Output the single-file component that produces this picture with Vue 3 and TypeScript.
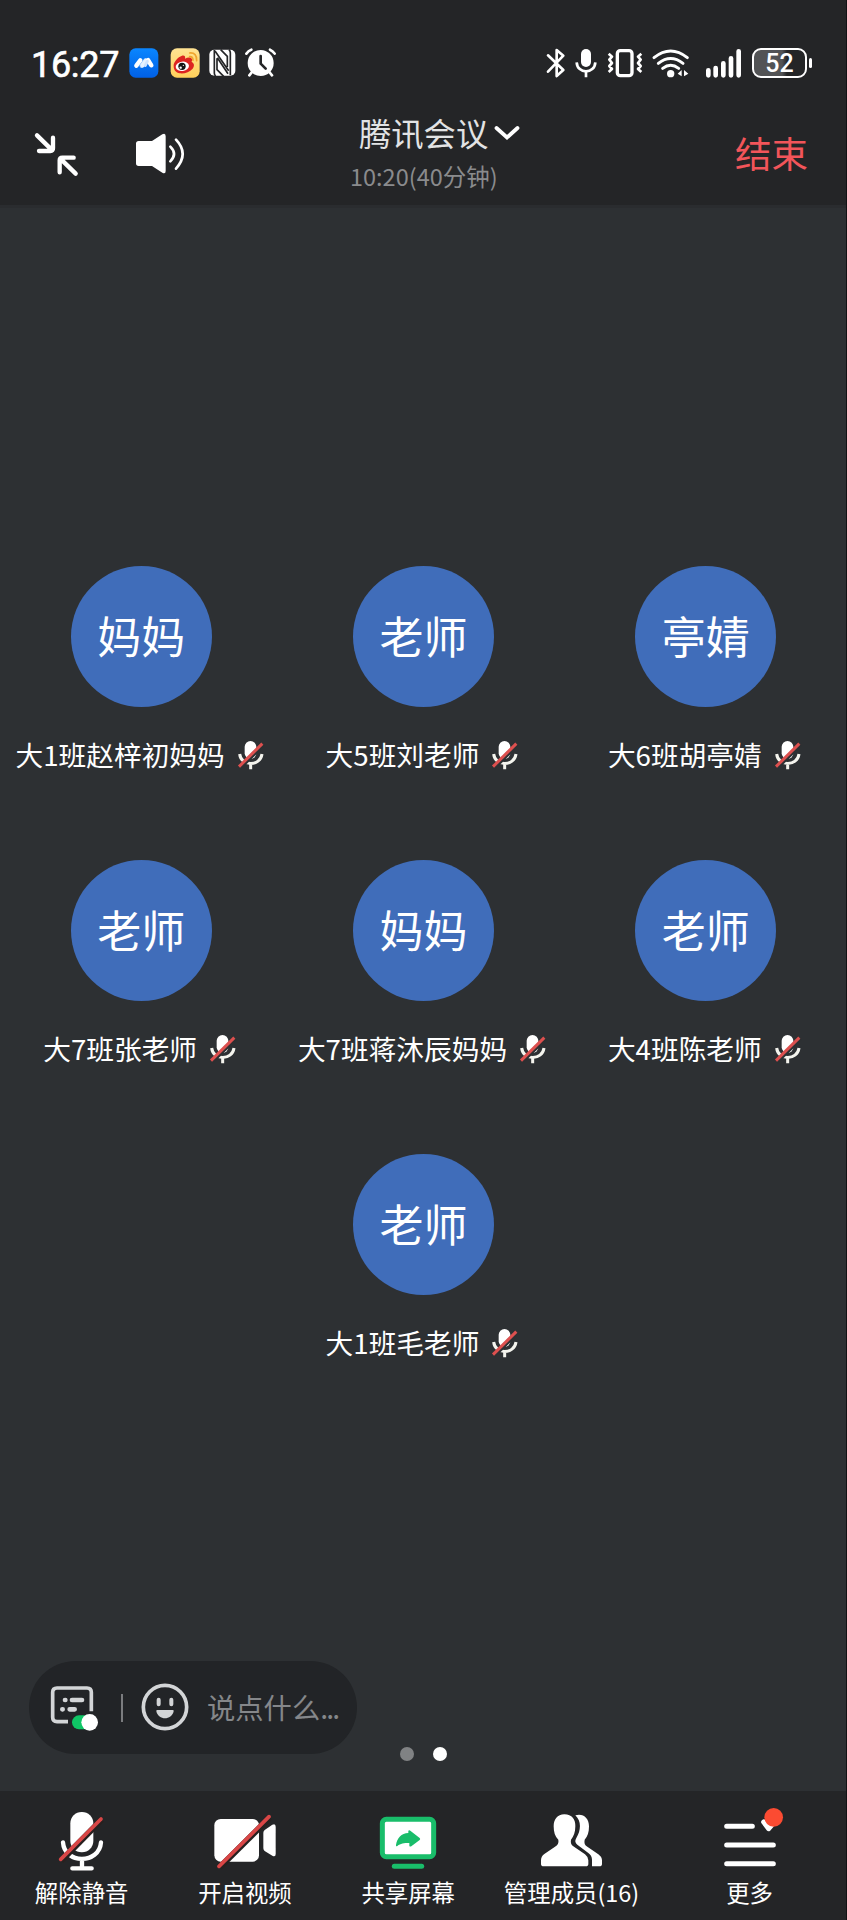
<script setup lang="ts">
interface Participant {
  avatar: string
  name: string
}

const participants: Participant[] = [
  { avatar: '妈妈', name: '大1班赵梓初妈妈' },
  { avatar: '老师', name: '大5班刘老师' },
  { avatar: '亭婧', name: '大6班胡亭婧' },
  { avatar: '老师', name: '大7班张老师' },
  { avatar: '妈妈', name: '大7班蒋沐辰妈妈' },
  { avatar: '老师', name: '大4班陈老师' },
  { avatar: '老师', name: '大1班毛老师' },
]
</script>

<template>
  <div class="screen">
    <header class="top">
      <div class="status">
        <span class="clock">16:27</span>
        <svg class="app meet" width="30" height="30" viewBox="387 53 90 90">
          <defs>
            <linearGradient id="meetBg" x1="0" y1="0" x2="0" y2="1">
              <stop offset="0" stop-color="#0a86ff" />
              <stop offset="1" stop-color="#0060e6" />
            </linearGradient>
          </defs>
          <rect x="388" y="54" width="87" height="88" rx="19" fill="url(#meetBg)" />
          <g stroke-linecap="round" stroke-width="13">
            <path d="M409 106l12-16" stroke="#fff" />
            <path d="M425 106l12-16" stroke="#a9d0ff" />
            <path d="M428 105l9-13" stroke="#e6f2ff" />
            <path d="M444 89l10 16" stroke="#fff" />
            <path d="M442 93l-6 12" stroke="#cfe4ff" stroke-width="9" />
          </g>
        </svg>
        <svg class="app weibo" width="30" height="30" viewBox="511 53 90 90">
          <defs>
            <linearGradient id="weiboBg" x1="0" y1="0" x2="0" y2="1">
              <stop offset="0" stop-color="#ffe393" />
              <stop offset="1" stop-color="#ffd05a" />
            </linearGradient>
          </defs>
          <rect x="513" y="54" width="87" height="88" rx="19" fill="url(#weiboBg)" />
          <path d="M522 107c-1-12 13-27 25-31 7-2 11 2 9 9 8-4 19-5 21 2 1 3-1 6-1 8 8 3 9 13 3 20-9 11-26 16-39 14-11-2-18-10-18-22z" fill="#dc2421" />
          <ellipse cx="548" cy="108" rx="20" ry="14" fill="#fff" transform="rotate(-8 548 108)" />
          <circle cx="547" cy="108" r="11" fill="#151515" />
          <circle cx="543" cy="112" r="3.5" fill="#fff" />
          <circle cx="551" cy="105" r="2" fill="#fff" />
          <path d="M570 79q10-1 10 11M570 68q22-2 21 23" fill="none" stroke="#f0a52e" stroke-width="5" stroke-linecap="round" />
        </svg>
        <svg class="nfc" width="27" height="28" viewBox="627 58 81 84">
          <rect x="628" y="60" width="78" height="78" rx="15" fill="#fff" />
          <path d="M643 61v70q0 5 4 8M691 137V69q0-5-4-9" fill="none" stroke="#242527" stroke-width="5" />
          <path d="M645 64l41 59M651 86v34l20 20M682 112V80l-20-20M652 84l32 48" fill="none" stroke="#242527" stroke-width="5" />
        </svg>
        <svg class="alarm" width="31" height="30" viewBox="737 55 93 90">
          <circle cx="784" cy="100" r="39" fill="#fff" />
          <path d="M741 72q6-9 15-12M812 60q9 4 14 12M758 127l-8 10M810 127l8 10" fill="none" stroke="#fff" stroke-width="8" stroke-linecap="round" />
          <path d="M784 79v23l15 15" fill="none" stroke="#242527" stroke-width="8" stroke-linecap="round" stroke-linejoin="round" />
        </svg>
        <span class="spring"></span>
        <svg class="bluetooth" width="20" height="30" viewBox="78 53 60 90">
          <path d="M84 75l46 44-20 18V59l20 17-46 48" fill="none" stroke="#fff" stroke-width="8" stroke-linecap="round" stroke-linejoin="round" />
        </svg>
        <svg class="mic" width="22" height="30" viewBox="166 53 66 90">
          <rect x="184" y="56" width="30" height="54" rx="15" fill="#fff" />
          <path d="M171 96c2 36 54 36 56 0M199 122v19" fill="none" stroke="#fff" stroke-width="8" />
        </svg>
        <svg class="vibrate" width="36" height="30" viewBox="261 53 108 90">
          <rect x="292" y="61" width="44" height="75" rx="9" fill="none" stroke="#fff" stroke-width="10" />
          <path d="M266 70l10 9-8 9 8 10-8 9 8 9-10 9M364 70l-10 9 8 9-8 10 8 9-8 9 10 9" fill="none" stroke="#fff" stroke-width="8" stroke-linejoin="round" />
        </svg>
        <svg class="wifi" width="38" height="30" viewBox="397 53 114 90">
          <path d="M403 82q50-40 100 0M416 99q37-29 74 0M429 114q24-18 48 0" fill="none" stroke="#fff" stroke-width="9" stroke-linecap="round" />
          <circle cx="453" cy="130" r="11" fill="#fff" />
          <path d="M486 119v19l-12-8zM493 119v19l13-8z" fill="#fff" />
        </svg>
        <svg class="signal" width="37" height="30" viewBox="555 53 111 90">
          <path d="M565 120v15M587 113v22M610 99v36M633 84v51M656 63v72" fill="none" stroke="#fff" stroke-width="14" stroke-linecap="round" />
        </svg>
        <span class="battery"><b>52</b></span>
      </div>

      <div class="bar">
        <svg class="collapse" width="46" height="46" viewBox="102 304 138 138">
          <path d="M111 314l46 45M117 361h34q8 0 8-8v-32M227 429l-46-45M221 381h-34q-8 0-8 8v36" fill="none" stroke="#fff" stroke-width="13" stroke-linecap="round" />
        </svg>
        <svg class="speaker" width="52" height="46" viewBox="402 304 156 138">
          <path d="M416 334h40l31-20q10-5 10 6v104q0 10-10 5l-31-20h-40q-8 0-8-8v-59q0-8 8-8z" fill="#fff" />
          <path d="M511 351q22 22 0 44M528 330q40 42 0 87" fill="none" stroke="#fff" stroke-width="8" stroke-linecap="round" />
        </svg>
        <div class="title">
          <div class="name">
            腾讯会议
            <svg width="28" height="18" viewBox="0 0 28 18">
              <path d="M3.5 4l10.500 9.500l10.500-9.500" fill="none" stroke="#fff" stroke-width="3.800" stroke-linecap="round" />
            </svg>
          </div>
          <div class="time">10:20(40分钟)</div>
        </div>
        <button class="end">结束</button>
      </div>
    </header>

    <main class="stage">
      <div class="grid">
        <div v-for="(p, i) in participants" :key="i" class="cell">
          <div class="avatar">{{ p.avatar }}</div>
          <div class="label">
            <span>{{ p.name }}</span>
            <svg width="26" height="30" viewBox="0 0 78 90">
              <rect x="20" y="3" width="35" height="54" rx="17.500" fill="#fff" />
              <path d="M5 42c4 38 62 38 67 0M38 70v18" fill="none" stroke="#f4f4ee" stroke-width="9" />
              <path d="M5 84L75 14" stroke="#2d3033" stroke-width="13" />
              <path d="M3 80L73 11" stroke="#dd504f" stroke-width="9" />
            </svg>
          </div>
        </div>
      </div>

      <div class="chat">
        <svg class="caption" width="50" height="50" viewBox="150 130 150 150">
          <path d="M204 246h-33q-13 0-13-13v-75q0-13 13-13h90q13 0 13 13v57" fill="none" stroke="#d3d5d7" stroke-width="11" />
          <path d="M195 181h1M216 181h30M187 209h1M209 209h15" stroke="#d3d5d7" stroke-width="14" stroke-linecap="round" />
          <rect x="216" y="227" width="66" height="42" rx="21" fill="#0fc565" />
          <circle cx="269" cy="248" r="25" fill="#fff" />
        </svg>
        <span class="divider"></span>
        <svg class="smile" width="48" height="48" viewBox="423 130 144 144">
          <circle cx="495" cy="202" r="65" fill="none" stroke="#d3d5d7" stroke-width="11" />
          <path d="M476 180v14M514 180v14" stroke="#d3d5d7" stroke-width="12" stroke-linecap="round" />
          <path d="M472 211h46q4 0 3 4c-6 28-46 28-52 0q-1-4 3-4z" fill="#d3d5d7" />
        </svg>
        <span class="hint">说点什么<span class="dots">...</span></span>
      </div>
      <div class="pager"><i></i><i class="on"></i></div>
    </main>

    <nav class="tabs">
      <div class="tab">
        <svg width="64" height="72" viewBox="149 81 192 216">
          <rect x="210" y="96" width="69" height="121" rx="34" fill="#fff" />
          <path d="M188 187c4 66 109 66 114 0M245 237v26M216 265h58" fill="none" stroke="#fff" stroke-width="13" stroke-linecap="round" />
          <path d="M183 242L304 119" stroke="#27201f" stroke-width="18" />
          <path d="M181 238L302 117" stroke="#d94646" stroke-width="11" stroke-linecap="round" />
        </svg>
        <span>解除静音</span>
      </div>
      <div class="tab">
        <svg width="64" height="72" viewBox="639 81 192 216">
          <rect x="643" y="117" width="134" height="128" rx="19" fill="#fff" />
          <path d="M794 150l23-16q10-5 10 6v82q0 10-10 5l-23-14q-4-3-4-9v-45q0-6 4-9z" fill="#fff" />
          <path d="M659 262L809 113" stroke="#27201f" stroke-width="18" />
          <path d="M657 259L807 110" stroke="#d94646" stroke-width="11" stroke-linecap="round" />
        </svg>
        <span>开启视频</span>
      </div>
      <div class="tab">
        <svg width="64" height="72" viewBox="1128 81 192 216">
          <rect x="1147" y="118" width="154" height="112" rx="12" fill="#fff" stroke="#19bd6a" stroke-width="15" />
          <path d="M1188 195c3-21 16-35 37-36v-7q3-2 6 0l28 22q3 3 0 6l-25 19q-5 2-6-2v-8c-17 0-26 1-36 9q-5 2-4-3z" fill="#19bd6a" />
          <path d="M1183 259h82" stroke="#19bd6a" stroke-width="15" stroke-linecap="round" />
        </svg>
        <span>共享屏幕</span>
      </div>
      <div class="tab">
        <svg width="64" height="72" viewBox="360 81 192 216">
          <path d="M433 103c23 0 34 16 33 36 0 18-5 31-13 40-2 10 1 16 9 21l33 23q10 8 10 18v11q0 7-8 7H371q-8 0-8-7v-11q0-12 10-19l32-22c8-5 12-11 10-21-10-9-14-23-14-40 0-20 11-36 32-36z" fill="#fff" />
          <path d="M466 106c23-7 41 8 41 33 0 18-4 31-13 40-2 10 0 16 8 21l33 23q11 8 11 18v11q0 7-8 7h-22v-20c0-9-4-16-12-21l-32-24c-7-6-8-12-3-20 14-22 16-50-3-68z" fill="#fff" />
        </svg>
        <span>管理成员(16)</span>
      </div>
      <div class="tab more">
        <svg width="64" height="72" viewBox="893 81 192 216">
          <path d="M919 139h77M919 195h140M919 251h140" stroke="#fff" stroke-width="15" stroke-linecap="round" />
          <path d="M1030 126l15 20 11-13" fill="none" stroke="#fff" stroke-width="15" stroke-linecap="round" stroke-linejoin="round" />
          <circle cx="1060" cy="112" r="28" fill="#fb4b32" />
        </svg>
        <span>更多</span>
      </div>
    </nav>
  </div>
</template>

<style>
body {
  margin: 0;
  background: #2d3033;
}
</style>

<style scoped>
.screen {
  box-sizing: border-box;
  width: 847px;
  height: 1920px;
  display: flex;
  flex-direction: column;
  background: #2d3033;
  color: #fff;
  font-family: 'Noto Sans CJK SC', sans-serif;
  overflow: hidden;
  box-shadow: inset -1px 0 #111214;
}
svg {
  display: block;
  flex: none;
  overflow: visible;
}
.top {
  height: 205px;
  background: #242527;
  border-bottom: 3px solid #2a2c2f;
  margin-right: 1px;
}
.status {
  display: flex;
  align-items: center;
  height: 126px;
  padding: 0 39px 0 31px;
}
.clock {
  width: 98px;
  font: 400 36px/40px Roboto, sans-serif;
  -webkit-text-stroke: 0.600px #fff;
  letter-spacing: -0.300px;
  white-space: nowrap;
  padding-top: 3px;
}
.weibo { margin-left: 11px; }
.nfc { margin-left: 9px; }
.alarm { margin-left: 9px; }
.spring { flex: 1; }
.mic { margin-left: 9px; }
.vibrate { margin-left: 10px; }
.wifi { margin-left: 9px; }
.signal { margin-left: 15px; }
.battery {
  position: relative;
  box-sizing: border-box;
  width: 55px;
  height: 30px;
  margin-left: 10px;
  border: 2px solid #fff;
  border-radius: 9px;
  background: linear-gradient(90deg, #525355 0 28px, #242527 33px);
  text-align: center;
}
.battery b {
  display: block;
  font: 500 25px/28px Roboto, sans-serif;
}
.battery::after {
  content: '';
  position: absolute;
  right: -7px;
  top: 8px;
  width: 3px;
  height: 10px;
  border-radius: 2px;
  background: #fff;
}
.bar {
  display: grid;
  grid-template-columns: 46px 52px 1fr auto;
  column-gap: 54px;
  align-items: center;
  height: 79px;
  padding: 0 38px 0 34px;
  margin-top: -11px;
}
.title {
  justify-self: start;
  margin-left: 115px;
  margin-top: -7px;
  width: 180px;
}
.speaker { margin-top: -1px; }
.name {
  display: flex;
  align-items: center;
  height: 44px;
  margin-left: 4px;
  font-size: 32.300px;
  line-height: 44px;
  color: #e2e3e4;
  white-space: nowrap;
}
.name svg {
  margin-left: 5px;
  margin-top: 3px;
}
.time {
  font-size: 23.500px;
  line-height: 34px;
  margin-top: 5px;
  margin-left: -5px;
  color: #8a8b8d;
  white-space: nowrap;
}
.end {
  border: 0;
  padding: 0;
  margin-top: -3px;
  background: none;
  color: #f2555a;
  font: 400 36.500px/44px 'Noto Sans CJK SC', sans-serif;
}
.stage {
  flex: 1;
  position: relative;
}
.grid {
  display: flex;
  flex-wrap: wrap;
  justify-content: center;
  padding-top: 358px;
}
.cell {
  width: 33.333%;
  height: 294px;
  display: flex;
  flex-direction: column;
  align-items: center;
}
.avatar {
  width: 141px;
  height: 141px;
  border-radius: 50%;
  background: #406dba;
  font-size: 44px;
  line-height: 138px;
  text-align: center;
}
.label {
  display: flex;
  align-items: center;
  height: 40px;
  margin-top: 28px;
  margin-right: 3px;
  gap: 13px;
  font-size: 27.700px;
  line-height: 38px;
  white-space: nowrap;
}
.label span { padding-bottom: 2px; }
.chat {
  position: absolute;
  left: 29px;
  bottom: 37px;
  box-sizing: border-box;
  width: 328px;
  height: 93px;
  padding-left: 21px;
  border-radius: 47px;
  background: #222427;
  display: flex;
  align-items: center;
}
.caption { margin-top: 1px; }
.smile { margin-top: -1px; }
.divider {
  width: 2px;
  height: 28px;
  margin: 0 18px 0 21px;
  background: #7b7c7f;
}
.hint {
  margin-left: 18px;
  margin-top: -2px;
  font-size: 28.300px;
  color: #85878a;
  white-space: nowrap;
}
.dots { letter-spacing: -1.800px; }
.pager {
  position: absolute;
  left: 400px;
  bottom: 30px;
  display: flex;
  gap: 19px;
}
.pager i {
  width: 14px;
  height: 14px;
  border-radius: 50%;
  background: #808284;
}
.pager .on { background: #fff; }
.tabs {
  height: 129px;
  margin-right: 1px;
  background: #242527;
  display: flex;
}
.tab {
  width: 163.300px;
  display: flex;
  flex-direction: column;
  align-items: center;
  padding-top: 16px;
  font-size: 23.400px;
  line-height: 34px;
  white-space: nowrap;
}
.tab span { margin-top: -4px; }
.more { flex: 1; }
</style>
